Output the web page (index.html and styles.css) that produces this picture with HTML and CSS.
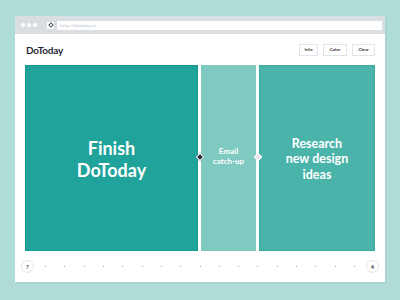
FILE: index.html
```html
<!DOCTYPE html>
<html>
<head>
<meta charset="utf-8">
<link rel="stylesheet" href="styles.css">
</head>
<body>
<div class="window">
  <div class="toolbar">
    <div class="dots"><span class="dot"></span><span class="dot"></span><span class="dot"></span></div>
    <div class="lock"><span class="lock-glyph"></span></div>
    <div class="url">http://dotoday.io</div>
  </div>
  <div class="page">
    <div class="header">
      <div class="logo">DoToday</div>
      <div class="buttons">
        <div class="btn">Info</div>
        <div class="btn">Color</div>
        <div class="btn">Clear</div>
      </div>
    </div>
    <div class="blocks">
      <div class="block block-a"><div class="big">Finish<br>DoToday</div></div>
      <div class="block block-b">
        <div class="small">Email<br>catch-up</div>
        <span class="handle handle-left"></span>
        <span class="handle handle-right"></span>
      </div>
      <div class="block block-c"><div class="mid">Research<br>new design<br>ideas</div></div>
    </div>
    <div class="timeline">
      <div class="circle">?</div>
      <div class="ticks">
        <span></span><span></span><span></span><span></span><span></span><span></span><span></span><span></span><span></span><span></span><span></span><span></span><span></span><span></span><span></span><span></span><span></span>
      </div>
      <div class="circle circle-r">4</div>
    </div>
  </div>
</div>
</body>
</html>
```
FILE: styles.css
```css
html, body {
  margin: 0;
  padding: 0;
}
body {
  background: #b0dcd7;
  width: 400px;
  height: 300px;
  overflow: hidden;
  font-family: "Lato", "Liberation Sans", sans-serif;
}
.window {
  margin: 16px 0 0 15px;
  width: 370px;
  height: 266px;
  background: #fff;
  box-shadow: 2px 2px 0 rgba(0, 0, 0, 0.04);
  display: flex;
  flex-direction: column;
}
.toolbar {
  height: 18px;
  background: #d9dee3;
  display: flex;
  align-items: center;
  padding: 0 3px 0 6px;
}
.dots {
  display: flex;
  gap: 2px;
}
.dot {
  width: 4px;
  height: 4px;
  border-radius: 50%;
  background: #fff;
}
.lock {
  margin-left: 10px;
  width: 7px;
  height: 7px;
  background: #fff;
  display: flex;
  align-items: center;
  justify-content: center;
}
.lock-glyph {
  width: 2px;
  height: 2px;
  border: 1px solid #45505c;
  transform: rotate(45deg);
}
.url {
  margin-left: 3px;
  flex: 1;
  height: 9px;
  background: #fff;
  font-size: 4.5px;
  line-height: 9px;
  color: #b7bec6;
  padding-left: 3px;
  letter-spacing: 0.2px;
}
.page {
  flex: 1;
  display: flex;
  flex-direction: column;
  padding: 0 10px;
}
.header {
  height: 31px;
  display: flex;
  align-items: center;
  justify-content: space-between;
}
.logo {
  font-size: 10px;
  font-weight: 700;
  color: #1e2a36;
  margin-left: 1px;
  margin-top: 1px;
  letter-spacing: -0.2px;
}
.buttons {
  display: flex;
  gap: 5px;
  margin-top: 1px;
}
.btn {
  height: 10px;
  border: 1px solid #e2e4e7;
  font-size: 4.5px;
  line-height: 10px;
  color: #333;
  text-align: center;
  font-weight: 700;
}
.btn:nth-child(1) { width: 17px; }
.btn:nth-child(2) { width: 22px; }
.btn:nth-child(3) { width: 21px; }
.blocks {
  height: 186px;
  display: flex;
  gap: 3px;
}
.block {
  box-sizing: border-box;
  display: flex;
  align-items: center;
  justify-content: center;
  color: #fff;
  text-align: center;
  font-weight: 700;
}
.block-a {
  width: 173px;
  background: #1fa39a;
  border: 1px solid #159a8f;
}
.block-b {
  width: 55px;
  background: #7ecac0;
  position: relative;
}
.block-c {
  width: 116px;
  background: #4bb4aa;
  border: 1px solid #3aab9f;
}
.big {
  font-size: 18px;
  line-height: 22px;
  margin-top: 1px;
}
.small {
  font-size: 8px;
  line-height: 9.5px;
  margin-top: -3px;
}
.mid {
  font-size: 12.5px;
  line-height: 15.5px;
  margin-top: 2px;
}
.handle {
  position: absolute;
  top: 50%;
  width: 4px;
  height: 4px;
  border: 1px solid #fff;
  transform: translateY(-50%) rotate(45deg);
  margin-top: -1px;
}
.handle-left {
  left: -4.5px;
  background: #1e2a36;
}
.handle-right {
  right: -4.5px;
  background: #e1e3e5;
}
.timeline {
  flex: 1;
  display: flex;
  align-items: center;
  margin: 0 -4px 0 -4px;
}
.circle {
  width: 11px;
  height: 11px;
  border: 1px solid #e3e5e8;
  border-radius: 50%;
  font-size: 5px;
  font-weight: 900;
  color: #1e2a36;
  display: flex;
  align-items: center;
  justify-content: center;
}
.ticks {
  flex: 1;
  margin: 0 11px;
  display: flex;
  justify-content: space-between;
  align-items: center;
}
.ticks span {
  width: 1px;
  height: 1px;
  background: #9aa2aa;
}
```
